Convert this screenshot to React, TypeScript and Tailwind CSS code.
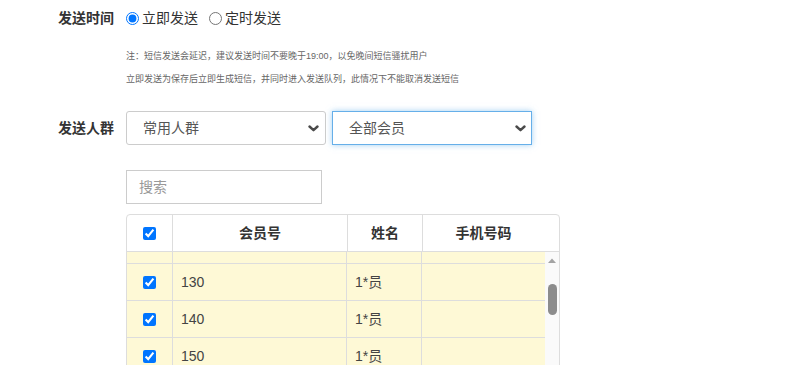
import React from 'react'

const rows = [
    { no: '', name: '', partial: true },
    { no: '130', name: '1*员' },
    { no: '140', name: '1*员' },
    { no: '150', name: '1*员' },
]

const Chevron = () => (
    <svg width="11" height="7" viewBox="0 0 11 7" className="shrink-0">
        <polyline points="1.5,1.5 5.5,5.2 9.5,1.5" fill="none" stroke="#4a4a4a" strokeWidth="2.4" strokeLinecap="round" strokeLinejoin="round" />
    </svg>
)

const Check = () => (
    <input type="checkbox" checked readOnly className="w-[13px] h-[13px] m-0" />
)

const App: React.FC = () => {
    return (
        <div className="w-[789px] h-[365px] overflow-hidden bg-white text-[#333] font-['Liberation_Sans','Noto_Sans_CJK_SC',sans-serif]">
            <div className="grid grid-cols-[114px_1fr] gap-x-[12px] pt-[8px]">
                {/* 发送时间 */}
                <div className="h-[20px] flex items-center justify-end text-[14px] font-bold">发送时间</div>
                <div className="h-[20px] flex items-center text-[14px]">
                    <input type="radio" name="sendTime" checked readOnly className="w-[13px] h-[13px] m-0" />
                    <span className="ml-[3px]">立即发送</span>
                    <input type="radio" name="sendTime" readOnly className="w-[13px] h-[13px] m-0 ml-[11px]" />
                    <span className="ml-[3px]">定时发送</span>
                </div>

                <div />
                <div className="mt-[17px] text-[9px] text-[#666]">
                    <div className="h-[23px] flex items-center">注：短信发送会延迟，建议发送时间不要晚于19:00，以免晚间短信骚扰用户</div>
                    <div className="h-[23px] flex items-center">立即发送为保存后立即生成短信，并同时进入发送队列，此情况下不能取消发送短信</div>
                </div>

                {/* 发送人群 */}
                <div className="mt-[20px] h-[34px] flex items-center justify-end text-[14px] font-bold">发送人群</div>
                <div className="mt-[20px] flex gap-[6px]">
                    <div className="w-[200px] h-[34px] flex items-center justify-between pl-[16px] pr-[6px] border border-[#ccc] rounded-[3px] text-[14px] text-[#555]">
                        <span>常用人群</span>
                        <Chevron />
                    </div>
                    <div className="w-[200px] h-[34px] flex items-center justify-between pl-[16px] pr-[5px] border border-[#66afe9] shadow-[0_0_6px_rgba(102,175,233,0.6)] text-[14px] text-[#555]">
                        <span>全部会员</span>
                        <Chevron />
                    </div>
                </div>

                <div />
                <div className="mt-[25px] w-[196px] h-[34px] flex items-center pl-[12px] border border-[#ccc] text-[14px] text-[#999]">
                    搜索
                </div>

                <div />
                {/* 会员表格 */}
                <div className="mt-[10px] w-[434px] border border-[#ddd] rounded-t-[4px] overflow-hidden">
                    <div className="grid grid-cols-[46px_175px_75px_121px_1fr] h-[37px] border-b border-[#ddd] text-[14px] font-bold">
                        <div className="flex items-center justify-center border-r border-[#ddd]"><Check /></div>
                        <div className="flex items-center justify-center border-r border-[#ddd]">会员号</div>
                        <div className="flex items-center justify-center border-r border-[#ddd]">姓名</div>
                        <div className="flex items-center justify-center">手机号码</div>
                        <div />
                    </div>
                    <div className="flex h-[200px]">
                        <div className="flex-1 bg-[#fef9d6]">
                            {rows.map((r, i) => (
                                <div
                                    key={i}
                                    className={`grid grid-cols-[46px_174px_75px_1fr] border-b border-[#ddd] text-[14px] text-[#444] ${r.partial ? 'h-[12px]' : 'h-[37px]'}`}
                                >
                                    <div className="flex items-center justify-center border-r border-[#ddd]">{!r.partial && <Check />}</div>
                                    <div className="flex items-center pl-[8px] border-r border-[#ddd]">{r.no}</div>
                                    <div className="flex items-center pl-[8px] border-r border-[#ddd]">{r.name}</div>
                                    <div />
                                </div>
                            ))}
                        </div>
                        <div className="w-[14px] bg-[#fafafa] flex flex-col items-center pt-[6px]">
                            <svg width="8" height="5" viewBox="0 0 8 5">
                                <polygon points="0,5 4,0.5 8,5" fill="#a3a3a3" />
                            </svg>
                            <div className="mt-[21px] w-[9px] h-[31px] rounded-full bg-[#8c8c8c]" />
                        </div>
                    </div>
                </div>
            </div>
        </div>
    )
}

export default App
